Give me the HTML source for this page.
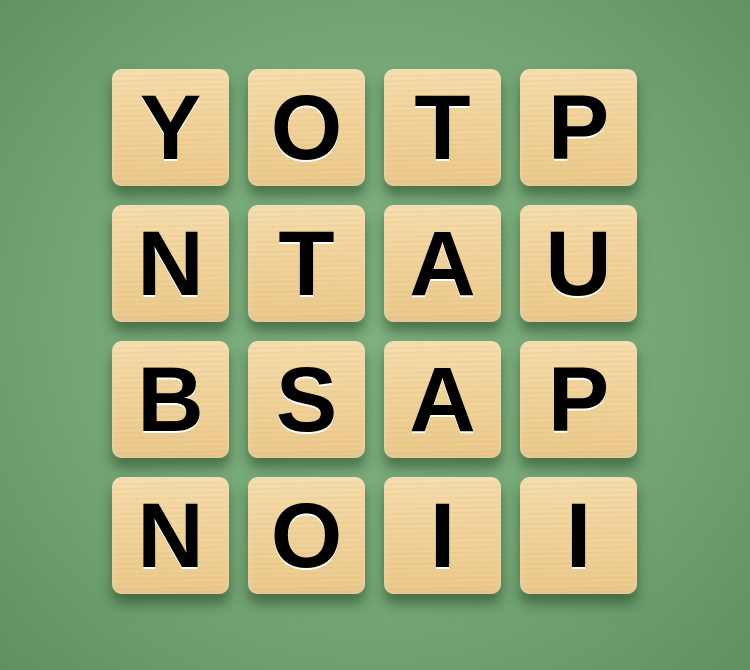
<!DOCTYPE html>
<html><head><style>
html,body{margin:0;padding:0}
body{width:750px;height:670px;overflow:hidden;background:radial-gradient(ellipse 70% 75% at 50% 48%,#7fb181 0%,#76a878 50%,#5f9062 100%);position:relative;font-family:"Liberation Sans",sans-serif}
.t{position:absolute;width:117px;height:117px;border-radius:10px;
background:repeating-linear-gradient(179deg,rgba(200,150,80,0.0) 0px,rgba(200,150,80,0.14) 2px,rgba(200,150,80,0) 5px),linear-gradient(180deg,#f7e0b0 0%,#f2d69e 45%,#eccb8e 100%);
box-shadow:0 10px 12px rgba(30,60,30,0.5), inset 0 0 6px rgba(255,245,220,0.7), inset 0 -2px 4px rgba(160,110,50,0.25);
text-align:center;line-height:119px;font-weight:bold;font-size:92px;color:#000;text-shadow:0 2px 0 #fff}
</style></head><body>
<div class="t" style="left:112px;top:69px">Y</div>
<div class="t" style="left:248px;top:69px">O</div>
<div class="t" style="left:384px;top:69px">T</div>
<div class="t" style="left:520px;top:69px">P</div>
<div class="t" style="left:112px;top:205px">N</div>
<div class="t" style="left:248px;top:205px">T</div>
<div class="t" style="left:384px;top:205px">A</div>
<div class="t" style="left:520px;top:205px">U</div>
<div class="t" style="left:112px;top:341px">B</div>
<div class="t" style="left:248px;top:341px">S</div>
<div class="t" style="left:384px;top:341px">A</div>
<div class="t" style="left:520px;top:341px">P</div>
<div class="t" style="left:112px;top:477px">N</div>
<div class="t" style="left:248px;top:477px">O</div>
<div class="t" style="left:384px;top:477px">I</div>
<div class="t" style="left:520px;top:477px">I</div>
</body></html>
